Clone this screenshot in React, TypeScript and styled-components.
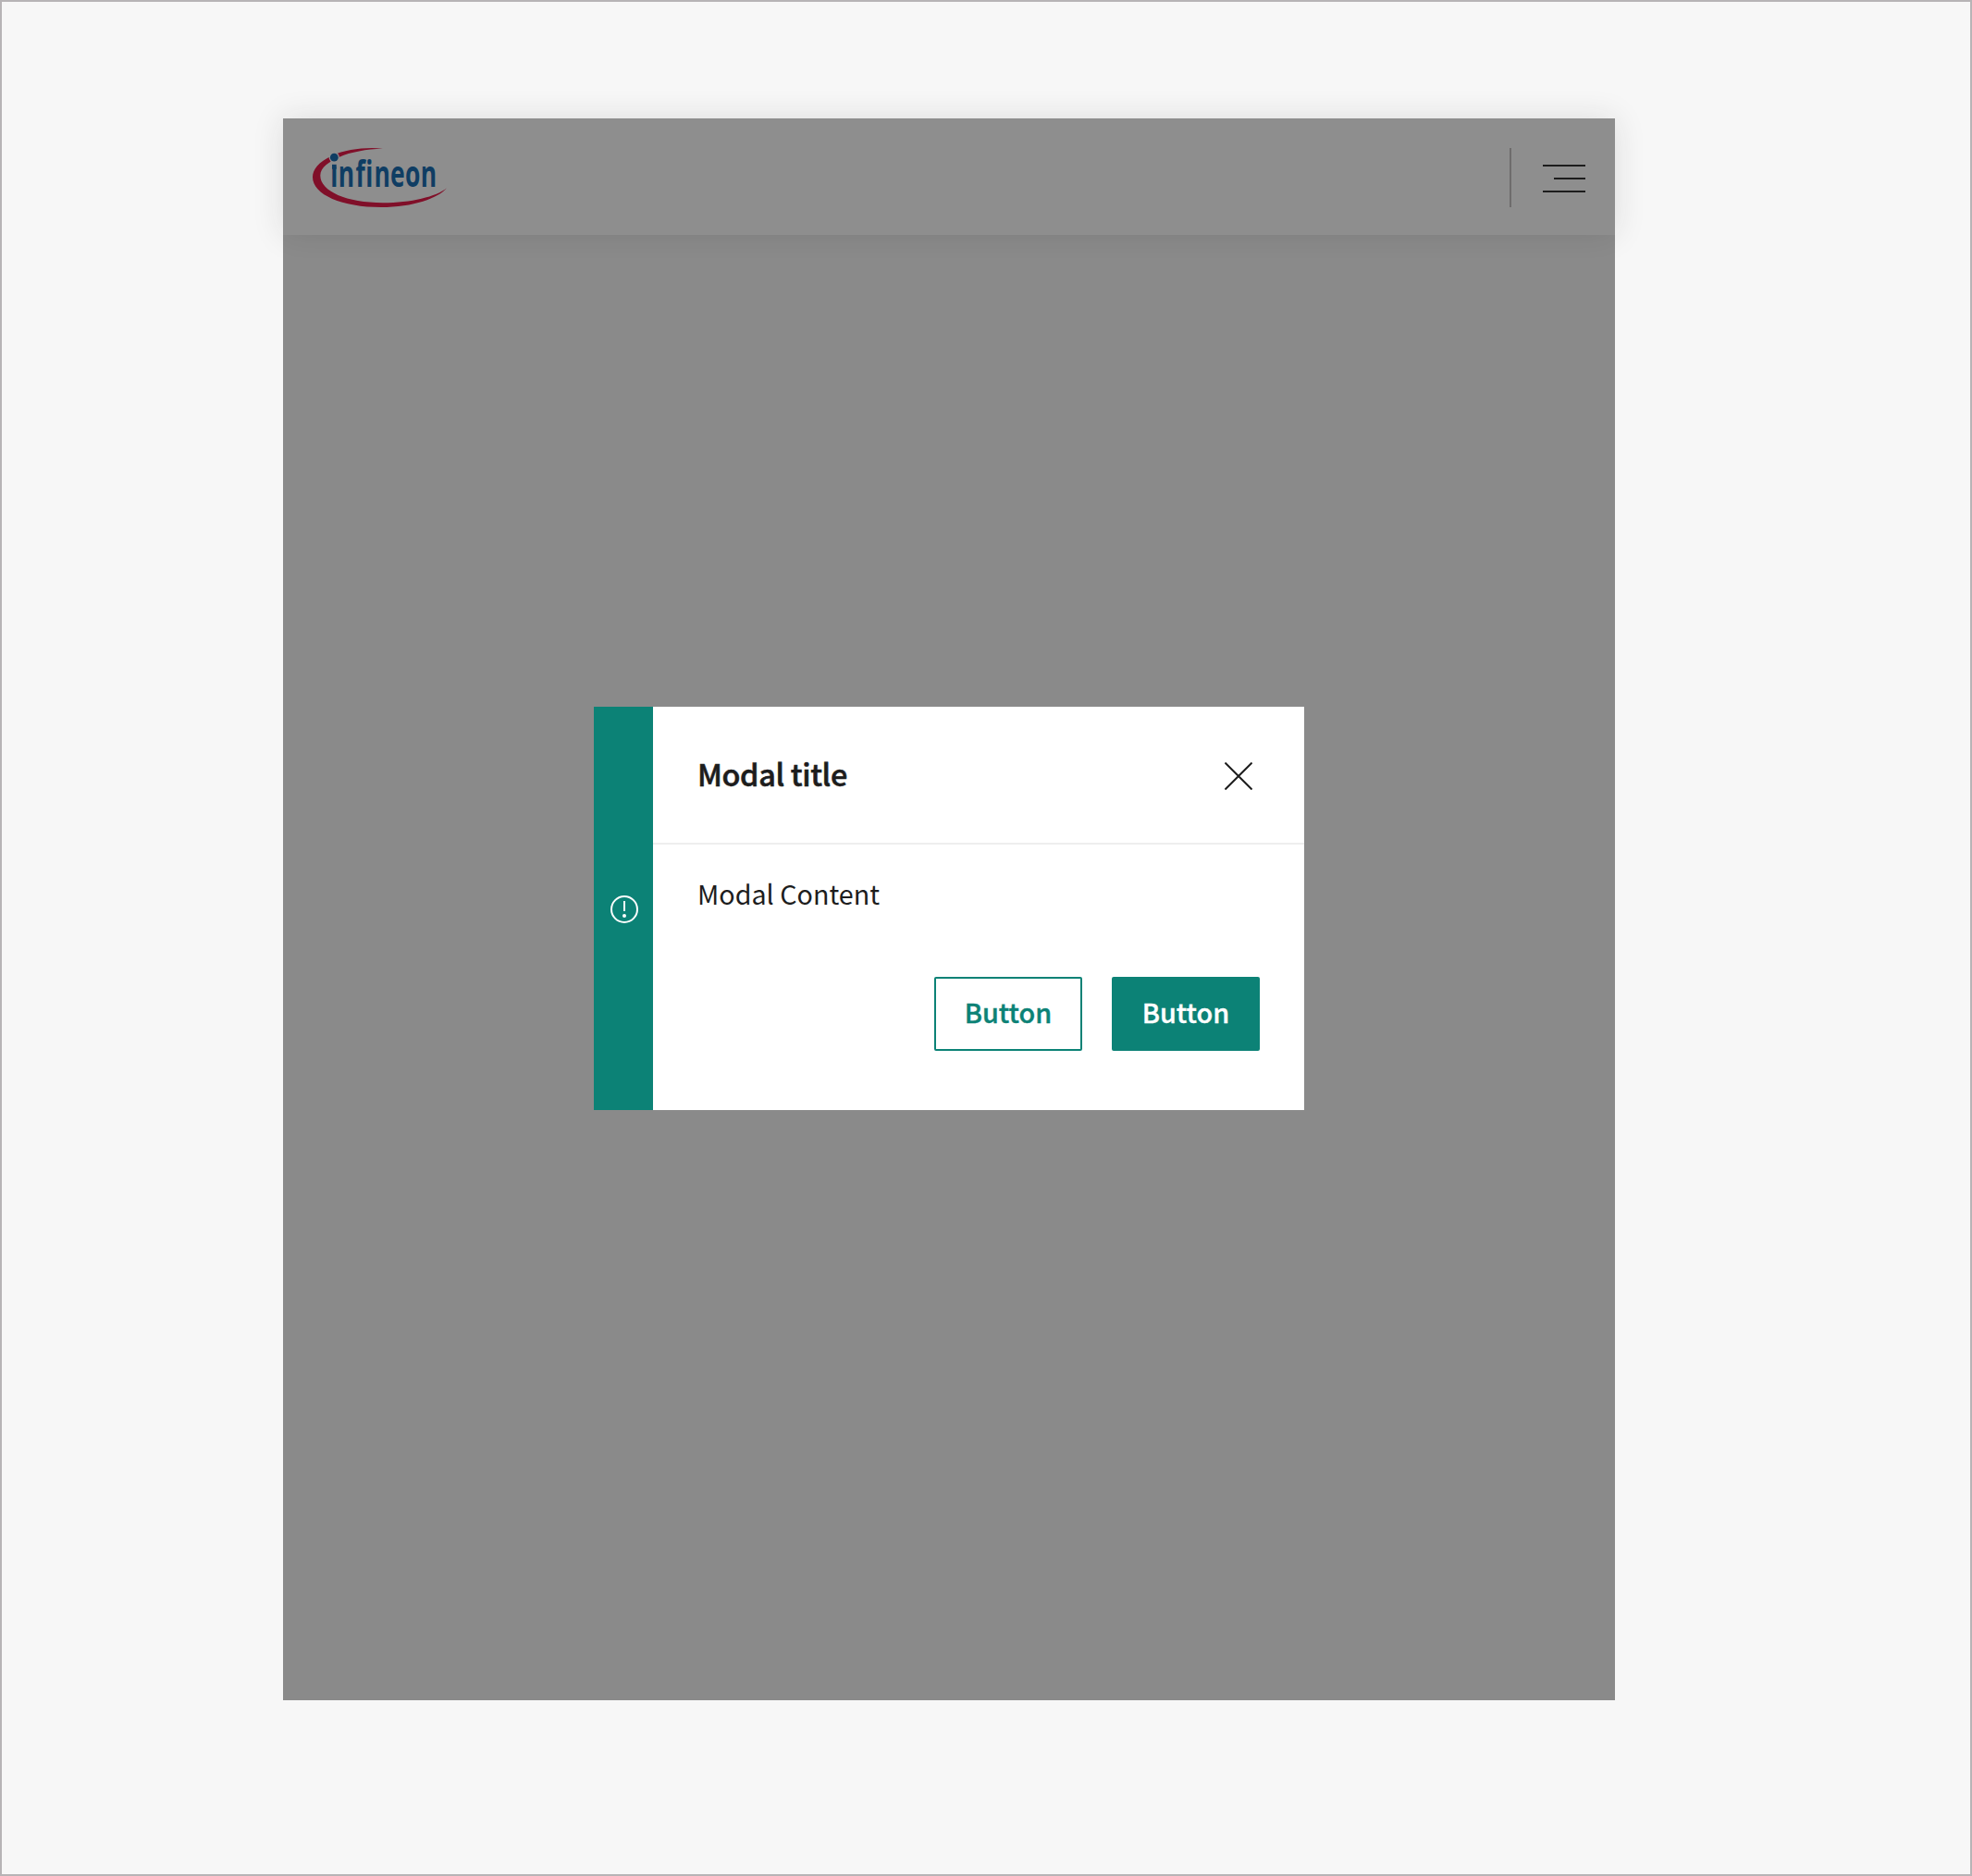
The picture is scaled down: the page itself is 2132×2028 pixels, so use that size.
import React from "react";
import styled, { createGlobalStyle } from "styled-components";

const Global = createGlobalStyle`
  *, *::before, *::after { box-sizing: border-box; }
  body { margin: 0; font-family: "Noto Sans CJK SC", "Noto Sans", sans-serif; color: #1d1d1d; }
`;

const Stage = styled.main`
  width: 2132px;
  height: 2028px;
  padding: 126px 0 0 304px;
  border: 2px solid #b7b4b6;
  background: #f7f7f7;
`;

const Frame = styled.div`
  position: relative;
  width: 1440px;
  height: 1710px;
  background: #f7f7f7;
`;

const Header = styled.header`
  position: relative;
  display: flex;
  align-items: center;
  justify-content: space-between;
  height: 126px;
  padding: 0 32px;
  background: #fff;
  box-shadow: 0 0 32px rgba(29, 29, 29, 0.12);
`;

const HeaderActions = styled.div`
  display: flex;
  align-items: center;
  gap: 34px;
`;

const Divider = styled.span`
  width: 2px;
  height: 64px;
  margin-top: 2px;
  background: #bfbbbb;
`;

const MenuButton = styled.button`
  display: flex;
  flex-direction: column;
  align-items: flex-end;
  gap: 12px;
  padding: 4px 0 0;
  border: 0;
  background: none;
`;

const MenuLine = styled.span<{ $width: number }>`
  width: ${(p) => p.$width}px;
  height: 2px;
  background: #1d1d1d;
`;

const Overlay = styled.div`
  position: absolute;
  inset: 0;
  display: flex;
  align-items: flex-start;
  justify-content: center;
  padding-top: 636px;
  background: rgba(29, 29, 29, 0.5);
`;

const Modal = styled.section`
  display: flex;
  width: 768px;
  height: 436px;
  background: #fff;
`;

const StatusBar = styled.div`
  display: flex;
  align-items: center;
  justify-content: center;
  width: 64px;
  padding: 2px 0 0 2px;
  background: #0c8276;
`;

const ModalMain = styled.div`
  display: flex;
  flex: 1;
  flex-direction: column;
`;

const ModalHeader = styled.div`
  display: flex;
  align-items: center;
  justify-content: space-between;
  height: 149px;
  padding: 2px 56px 0 48px;
  border-bottom: 2px solid #eee;
`;

const Title = styled.h2`
  margin: 0 0 5px;
  font-size: 32.4px;
  line-height: 48px;
  font-weight: 500;
  letter-spacing: -0.35px;
  -webkit-text-stroke: 0.6px currentColor;
`;

const CloseButton = styled.button`
  display: flex;
  padding: 0;
  border: 0;
  background: none;
`;

const Content = styled.p`
  margin: 0;
  padding: 29px 48px 0;
  font-size: 28.7px;
  line-height: 48px;
`;

const Actions = styled.div`
  display: flex;
  justify-content: flex-end;
  gap: 32px;
  margin-top: auto;
  padding: 0 48px 64px;
`;

const Button = styled.button<{ $solid?: boolean }>`
  width: 160px;
  height: 80px;
  padding: 0 0 4px;
  border: 2px solid #0c8276;
  border-radius: 2px;
  background: ${(p) => (p.$solid ? "#0c8276" : "#fff")};
  color: ${(p) => (p.$solid ? "#fff" : "#0c8276")};
  font: 500 28.8px/48px "Noto Sans CJK SC", "Noto Sans", sans-serif;
  -webkit-text-stroke: 0.4px currentColor;
`;

const LogoSvg = styled.svg`
  display: block;
  margin-top: 2px;
`;

function Logo() {
  return (
    <LogoSvg width="146" height="64" viewBox="0 0 146 64" role="img" aria-label="infineon">
      <defs>
        <clipPath id="word">
          <path d="M0 20H27V0H146V64H0Z" />
        </clipPath>
      </defs>
      <path
        fill="#e30034"
        d="M76 .6C57-1.2 36 1.4 21 8.2C6 15 0 23.5 0 31.5C0 50.5 32 64 74 64C109 64 136 54 145 43.2C134 52.5 106 59.2 76 59.2C37 59.2 8.3 47 8.3 29.8C8.3 21 18 14.8 29 9.8C41 4.4 58 1.4 76 .6Z"
      />
      <circle cx="23.3" cy="10.2" r="5.6" fill="#fff" />
      <circle cx="23.3" cy="10.2" r="4.4" fill="#005da9" />
      <rect x="21" y="17.8" width="4.7" height="5" fill="#005da9" />
      <g clipPath="url(#word)">
        <text
          transform="translate(0 42.3) scale(.67 1)"
          fill="#005da9"
          fontFamily="Open Sans, sans-serif"
          fontSize="39.5"
          fontWeight="700"
          x="28.7 41.6 69.4 85.6 99.2 125.2 149.2 174.4"
        >
          infineon
        </text>
      </g>
    </LogoSvg>
  );
}

export default function App() {
  return (
    <Stage>
      <Global />
      <Frame>
        <Header>
          <Logo />
          <HeaderActions>
            <Divider />
            <MenuButton aria-label="Menu">
              <MenuLine $width={46} />
              <MenuLine $width={34} />
              <MenuLine $width={46} />
            </MenuButton>
          </HeaderActions>
        </Header>
        <Overlay>
          <Modal role="dialog">
            <StatusBar>
              <svg width="30" height="30" viewBox="0 0 30 30" fill="none" stroke="#fff" strokeWidth="2">
                <circle cx="15" cy="15" r="14" />
                <path d="M15 6V17" />
                <circle cx="15" cy="22" r="2" fill="#fff" stroke="none" />
              </svg>
            </StatusBar>
            <ModalMain>
              <ModalHeader>
                <Title>Modal title</Title>
                <CloseButton aria-label="Close">
                  <svg width="30" height="30" viewBox="0 0 30 30" stroke="#1d1d1d" strokeWidth="2">
                    <path d="M.5 .5L29.5 29.5M29.5 .5L.5 29.5" />
                  </svg>
                </CloseButton>
              </ModalHeader>
              <Content>Modal Content</Content>
              <Actions>
                <Button>Button</Button>
                <Button $solid>Button</Button>
              </Actions>
            </ModalMain>
          </Modal>
        </Overlay>
      </Frame>
    </Stage>
  );
}
